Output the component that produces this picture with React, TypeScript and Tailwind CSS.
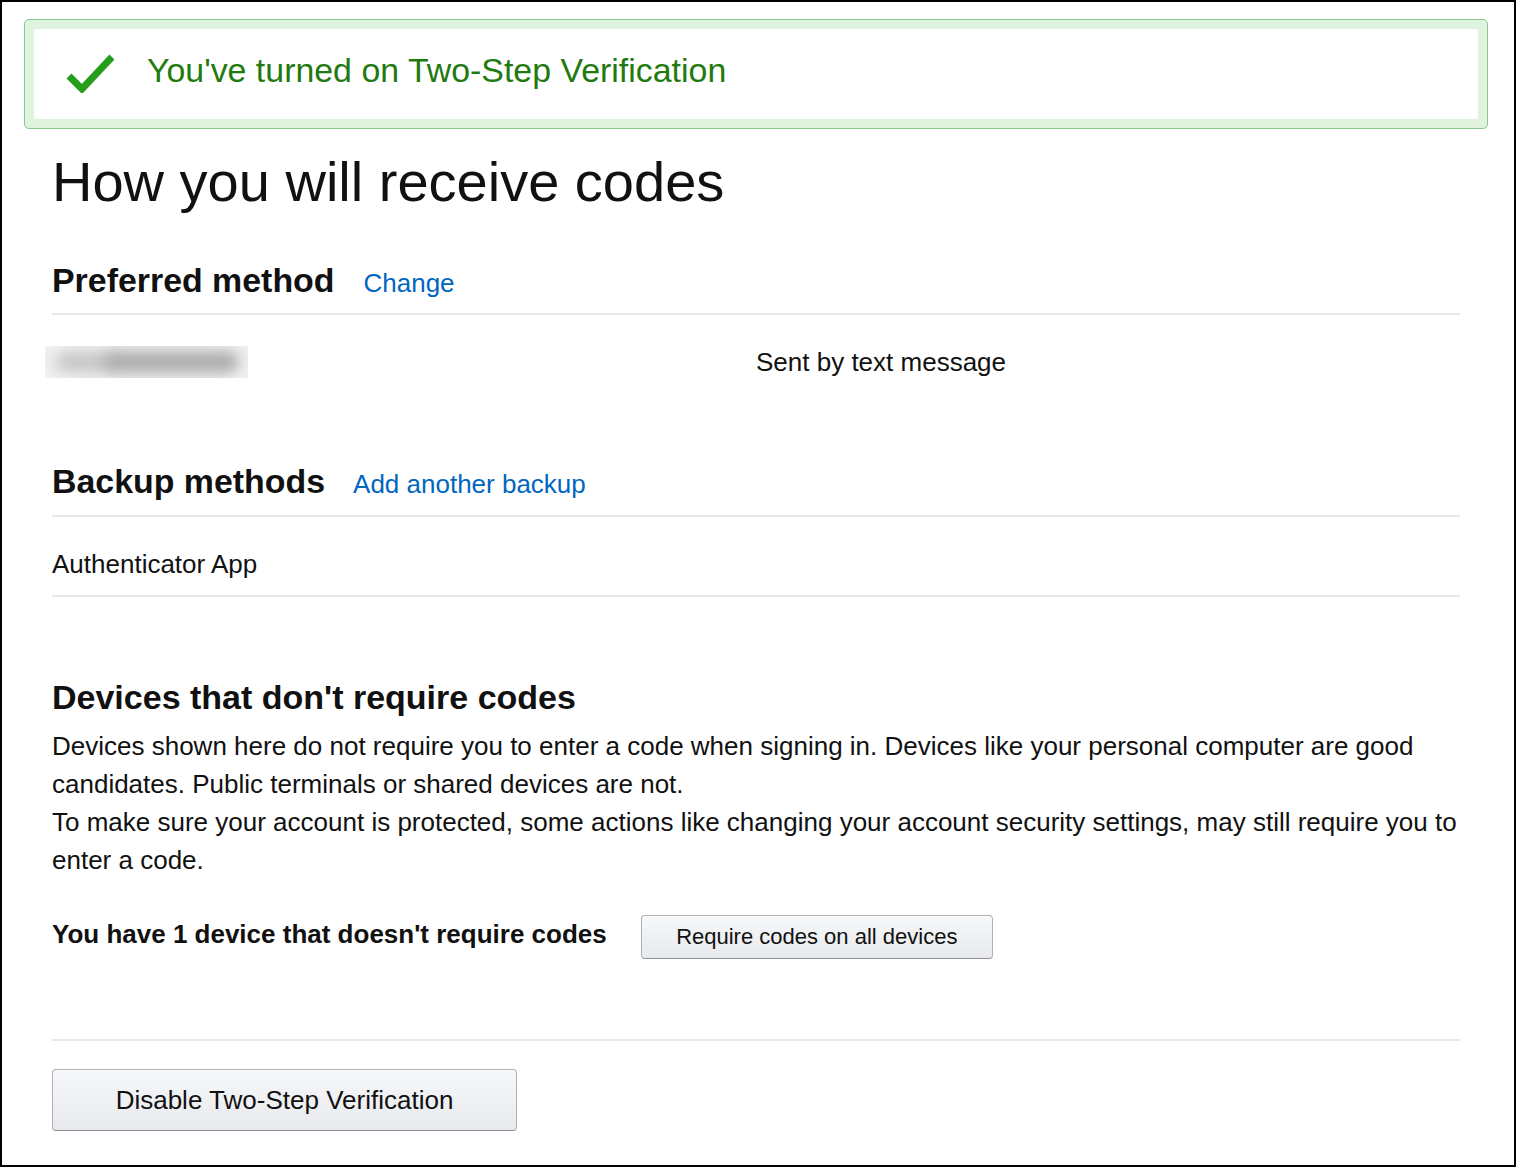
import React from "react";

function Divider({ className = "" }: { className?: string }) {
  return <div className={"h-[2px] w-full bg-[#e7e7e7] " + className} />;
}

export default function App() {
  return (
    <div
      className="w-[1516px] h-[1167px] bg-white border-2 border-black box-border text-[#111111]"
      style={{ fontFamily: '"Liberation Sans", Arial, Helvetica, sans-serif' }}
    >
      {/* Success banner */}
      <div className="ml-[22px] mt-[17px] w-[1464px] h-[110px] rounded-[5px] border border-[#89c98b] bg-[#dff3de] p-[9px]">
        <div className="h-[90px] bg-white rounded-[2px] flex items-start pl-[32px] pt-[22px]">
          <svg width="48" height="40" viewBox="0 0 48 40" className="mt-[2px] shrink-0">
            <path d="M3 23 L16 36 L46 4" fill="none" stroke="#259e1c" strokeWidth="7" strokeLinejoin="miter" />
          </svg>
          <span className="ml-[33px] mt-[2px] text-[33.9px] leading-[34px] text-[#1f7a0f]">
            You've turned on Two-Step Verification
          </span>
        </div>
      </div>

      {/* Content */}
      <div className="pl-[50px] w-[1458px]">
        <h1 className="mt-[25px] text-[56px] leading-[56px] font-normal text-[#111111]">
          How you will receive codes
        </h1>

        {/* Preferred method */}
        <div className="mt-[53px] flex items-baseline">
          <h2 className="text-[33.9px] leading-[34px] font-bold">Preferred method</h2>
          <a className="ml-[29px] text-[26px] leading-[26px] text-[#0066c0]">Change</a>
        </div>
        <Divider className="mt-[16px]" />
        <div className="grid grid-cols-2 mt-[31px] items-center">
          <div className="relative w-[203px] h-[32px] -ml-[7px] bg-[#f1f1f1] overflow-hidden">
            <div className="absolute left-[10px] top-[6px] w-[60px] h-[20px] rounded-full bg-[#c6c6c6] blur-[7px]" />
            <div className="absolute left-[58px] top-[5px] w-[136px] h-[22px] rounded-full bg-[#adadad] blur-[7px]" />
          </div>
          <div className="text-[26px] leading-[32px]">Sent by text message</div>
        </div>

        {/* Backup methods */}
        <div className="mt-[86px] flex items-baseline">
          <h2 className="text-[33.9px] leading-[34px] font-bold">Backup methods</h2>
          <a className="ml-[28px] text-[26px] leading-[26px] text-[#0066c0]">Add another backup</a>
        </div>
        <Divider className="mt-[17px]" />
        <div className="mt-[34px] text-[26px] leading-[26px]">Authenticator App</div>
        <Divider className="mt-[18px]" />

        {/* Devices */}
        <h2 className="mt-[83px] text-[34px] leading-[34px] font-bold">
          Devices that don't require codes
        </h2>
        <div className="mt-[13px] text-[26px] leading-[38px]">
          <p>
            Devices shown here do not require you to enter a code when signing in. Devices like your personal computer are good
            candidates. Public terminals or shared devices are not.
          </p>
          <p>
            To make sure your account is protected, some actions like changing your account security settings, may still require you to
            enter a code.
          </p>
        </div>

        <div className="mt-[36px] flex items-start">
          <div className="mt-[6px] text-[26px] leading-[26px] font-bold">
            You have 1 device that doesn't require codes
          </div>
          <button className="ml-[34px] w-[352px] h-[44px] rounded-[4px] border border-[#adb1b8] border-b-[#8d9096] bg-gradient-to-b from-[#f7f8fa] to-[#e7e9ec] text-[22px] leading-[22px] text-[#111111] shadow-[inset_0_1px_0_rgba(255,255,255,0.6)]">
            Require codes on all devices
          </button>
        </div>

        <Divider className="mt-[80px]" />

        <button className="mt-[28px] w-[465px] h-[62px] rounded-[4px] border border-[#adb1b8] border-b-[#8d9096] bg-gradient-to-b from-[#f7f8fa] to-[#e7e9ec] text-[26px] leading-[26px] text-[#111111] shadow-[inset_0_1px_0_rgba(255,255,255,0.6)]">
          Disable Two-Step Verification
        </button>
      </div>
    </div>
  );
}
